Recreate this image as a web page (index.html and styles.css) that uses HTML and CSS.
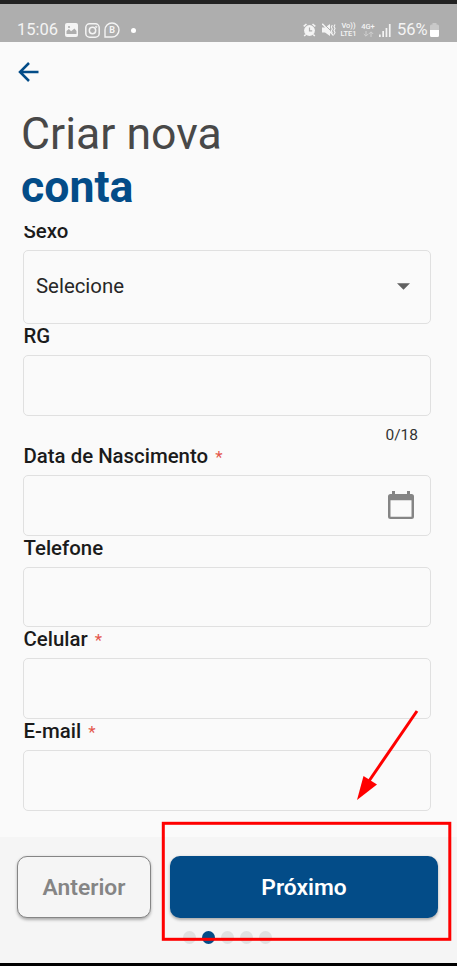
FILE: index.html
```
<!DOCTYPE html>
<html lang="pt-BR">
<head>
<meta charset="utf-8">
<title>Criar nova conta</title>
<link rel="stylesheet" href="styles.css">
</head>
<body>
<div class="screen">
  <header class="status">
    <span class="clock">15:06</span>
    <svg class="ic-photo" width="13" height="14" viewBox="0 0 13 14"><rect width="13" height="14" rx="2" fill="#f4f4f4"/><path d="M1.5 11V8l2.4-2 2.2 2.3L9.500 5.500l2 2.500v3z" fill="#aeaeae"/><circle cx="4" cy="4" r="1.100" fill="#aeaeae"/></svg>
    <svg class="ic-cam" width="15" height="15" viewBox="0 0 15 15" fill="none" stroke="#f4f4f4" stroke-width="1.500"><rect x=".8" y=".8" width="13.400" height="13.400" rx="3.800"/><circle cx="7.500" cy="7.500" r="3.200"/><circle cx="11.300" cy="3.800" r=".4"/></svg>
    <svg class="ic-chat" width="16" height="16" viewBox="0 0 16 16"><path d="M1 15V8a7 7 0 1 1 7 7z" fill="none" stroke="#f4f4f4" stroke-width="1.400"/><text x="8" y="11.300" text-anchor="middle" class="chat-b">B</text></svg>
    <span class="more"></span>
    <span class="grow"></span>
    <svg class="ic-alarm" width="13" height="14" viewBox="0 0 13 14"><circle cx="6.500" cy="7.500" r="5.400" fill="#f4f4f4"/><path d="M.7 3.300 3.500 1M12.300 3.300 9.500 1M2.800 11.500 1.200 13M10.200 11.500l1.600 1.500" stroke="#f4f4f4" stroke-width="1.600"/><path d="M6.500 4.500v3.300h2.700" fill="none" stroke="#aeaeae" stroke-width="1.200"/></svg>
    <svg class="ic-mute" width="14" height="14" viewBox="0 0 14 14"><path d="M0 4.500h3L8 1v12L3 9.500H0z" fill="#f4f4f4"/><path d="M1.300 .3 9 8" stroke="#aeaeae" stroke-width="1"/><path d="M.3.8 11.500 12.500" stroke="#f4f4f4" stroke-width="1.300"/><path d="M10.300 2l-1 2 1 2-1 2 1 2M13 1.500l-1 2 1 2-1 2 1 2-1 2" fill="none" stroke="#f4f4f4" stroke-width="1.100"/></svg>
    <span class="net volte"><span>Vo))</span><span>LTE1</span></span>
    <span class="net mobile"><span>4G+</span><svg width="11" height="6" viewBox="0 0 11 6" fill="none" stroke="#cfcfcf" stroke-width="1"><path d="M3 0v5M.8 3 3 5.200 5.200 3M8 6V1M5.800 3 8 .8 10.200 3"/></svg></span>
    <svg class="ic-signal" width="12" height="13" viewBox="0 0 12 13" fill="#f4f4f4"><path d="M0 10.500h1.700V13H0zM3.300 7H5v6H3.300zM6.600 4h1.700v9H6.600zM9.900 0h1.700v13H9.900z"/></svg>
    <span class="percent">56%</span>
    <svg class="ic-batt" width="9" height="14" viewBox="0 0 9 14"><path d="M2.500 1.500V0h4v1.500H7.500A1.500 1.500 0 0 1 9 3v4H0V3a1.500 1.500 0 0 1 1.500-1.500z" fill="#c8c8c8"/><path d="M0 7h9v5.500A1.500 1.500 0 0 1 7.500 14h-6A1.500 1.500 0 0 1 0 12.500z" fill="#fff"/></svg>
  </header>

  <nav class="appbar">
    <svg width="21" height="20" viewBox="0 0 21 20" fill="none" stroke="#034c88" stroke-width="2.500"><path d="M20.500 10H2M11 1 2 10l9 9"/></svg>
  </nav>
  <h1 class="title"><span class="light">Criar nova</span><span class="strong">conta</span></h1>

  <main class="form">
    <div class="label first">Sexo</div>
    <div class="box select"><span>Selecione</span><svg width="13" height="7" viewBox="0 0 13 7"><path d="M0 .3h13L6.500 6.800z" fill="#616161"/></svg></div>
    <div class="label">RG</div>
    <div class="box"></div>
    <div class="counter">0/18</div>
    <div class="label">Data de Nascimento <span class="req">*</span></div>
    <div class="box date"><svg width="26" height="28" viewBox="0 0 26 28"><path d="M4 0h3v3h12V0h3v3h1.500A2.500 2.500 0 0 1 26 5.500v20a2.500 2.500 0 0 1-2.500 2.500h-21A2.500 2.500 0 0 1 0 25.500v-20A2.500 2.500 0 0 1 2.500 3H4zM2.500 9.200v16.500h21V9.200z" fill="#858585" fill-rule="evenodd"/></svg></div>
    <div class="label">Telefone</div>
    <div class="box"></div>
    <div class="label">Celular <span class="req">*</span></div>
    <div class="box"></div>
    <div class="label">E-mail <span class="req">*</span></div>
    <div class="box"></div>
  </main>

  <footer class="footer">
    <div class="buttons">
      <button class="btn prev">Anterior</button>
      <button class="btn next">Próximo</button>
    </div>
    <div class="dots"><i></i><i class="on"></i><i></i><i></i><i></i></div>
  </footer>
  <svg class="annotation" width="457" height="966" viewBox="0 0 457 966"><rect x="163.300" y="823.300" width="286.500" height="116" fill="none" stroke="#f00" stroke-width="3"/><path d="M417 711 369 781" stroke="#f00" stroke-width="3"/><path d="M357 800 363.500 776 377 784.500z" fill="#f00"/></svg>
</div>
</body>
</html>
```
FILE: styles.css
```
* { box-sizing: border-box; }
body { margin: 0; font-family: Roboto, "Liberation Sans", sans-serif; }
.screen {
  position: relative;
  display: flex;
  flex-direction: column;
  width: 457px;
  height: 966px;
  overflow: hidden;
  background: #fafafa;
  border-top: 4px solid #222;
  border-bottom: 3px solid #000;
}
.status {
  flex: none;
  display: flex;
  align-items: center;
  height: 37.500px;
  padding: 15px 18px 0 17px;
  background: #aeaeae;
  color: #f4f4f4;
}
.clock { width: 48px; font-size: 16.500px; line-height: 20px; }
.ic-cam { margin-left: 7px; }
.ic-chat { margin-left: 4px; }
.chat-b { font-size: 9px; font-weight: 700; fill: #f4f4f4; }
.more { width: 5px; height: 5px; margin-left: 11px; border-radius: 50%; background: #fff; }
.grow { flex: 1; }
.ic-mute { margin-left: 6px; }
.net { display: flex; flex-direction: column; align-items: center; font-size: 7.500px; font-weight: 500; line-height: 9px; }
.volte { width: 17px; margin-left: 4px; }
.volte span + span { margin-top: -1px; }
.volte span { line-height: 8.500px; }
.mobile { width: 14px; height: 16px; margin-left: 4px; }
.mobile svg { flex: none; }
.ic-signal { margin-left: 4px; }
.percent { width: 32px; margin-left: 6px; font-size: 16.500px; line-height: 20px; }
.ic-batt { margin-left: 1px; }
.appbar { flex: none; height: 64.500px; padding: 20.500px 0 0 18px; }
.appbar svg { display: block; }
.title {
  flex: none;
  display: flex;
  flex-direction: column;
  height: 120px;
  margin: 0;
  padding: 2.200px 0 0 21px;
  font-size: 44.600px;
  line-height: 52.500px;
}
.light { font-weight: 400; color: #484848; }
.strong { font-weight: 700; color: #034c88; }
.form { flex: 1; min-height: 0; overflow: hidden; padding: 0 25.500px 0 23.500px; }
.label { height: 31px; font-size: 20.400px; padding-top: 1px; font-weight: 500; line-height: 23px; color: #1b1b1b; white-space: nowrap; }
.first { margin-top: -7px; }
.req { margin-left: 2px; font-size: 17px; font-weight: 400; line-height: 20px; color: #e4574c; }
.box { height: 60.800px; margin: 0 .5px 0 -.5px; border: 1.500px solid #e0e0e0; border-radius: 5px; }
.select { display: flex; align-items: center; justify-content: space-between; height: 74px; padding: 0 20.500px 2px 12px; font-size: 20.400px; color: #272727; }
.counter { height: 28px; padding: 8px 13.500px 0 0; font-size: 15.500px; line-height: 22px; text-align: right; color: #333; }
.date { display: flex; align-items: center; justify-content: flex-end; padding-right: 16px; }
.footer { flex: none; height: 126px; padding: 18.500px 19px 0 17px; background: #f5f5f5; }
.buttons { display: flex; gap: 19px; }
.btn { height: 62.500px; padding: 1px 0 0; border: 0; border-radius: 10px; font-family: inherit; font-size: 22.800px; font-weight: 600; box-shadow: 0 1.500px 3px rgba(0, 0, 0, .3); }
.prev { width: 134px; border: 1.500px solid #858585; background: #f5f5f5; color: #858585; }
.next { flex: 1; background: #034c88; color: #fff; }
.dots { display: flex; gap: 6px; margin-top: 12.500px; padding-left: 166px; }
.dots i { width: 13px; height: 13px; border-radius: 50%; background: #e0e0e0; }
.dots .on { background: #034c88; }
.annotation { position: absolute; top: -4px; left: 0; pointer-events: none; }
```
